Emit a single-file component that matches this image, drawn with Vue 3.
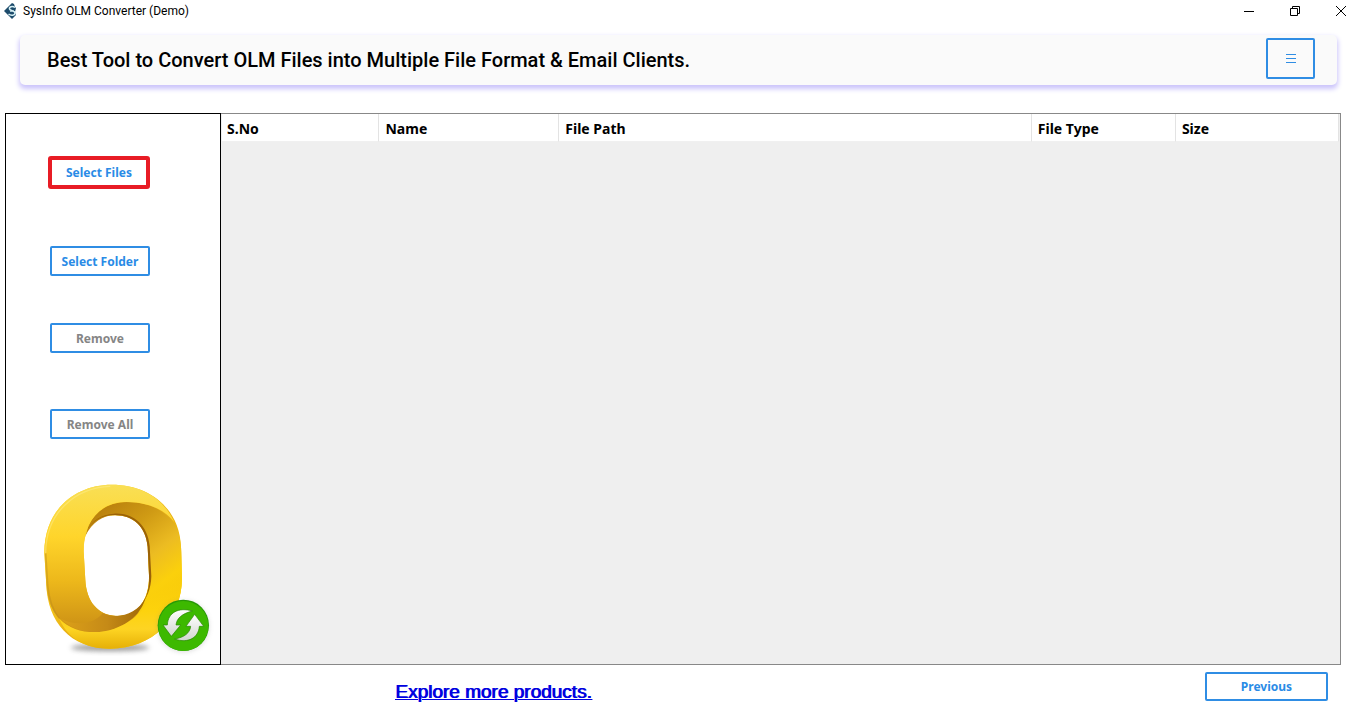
<template>
  <div class="window">
    <header class="titlebar">
      <svg class="app-icon" viewBox="0 0 14 16" aria-hidden="true">
        <path d="M0 8 8 0l2 1 1 3 1 1-1 4 1 3-2 2-2 2z" fill="#1d4b6b" />
        <path d="M11 4.500C8 2.500 5 4 5.500 6S11 7.500 11 10s-4 3-6.500 1M6 8h4" fill="none" stroke="#d8f1f5" stroke-width="1.500" />
      </svg>
      <span class="app-name">SysInfo OLM Converter (Demo)</span>
      <div class="window-controls">
        <button type="button" aria-label="Minimize">
          <svg viewBox="0 0 12 12"><path d="M1 6.500h10" /></svg>
        </button>
        <button type="button" aria-label="Restore">
          <svg viewBox="0 0 12 12"><path d="M1.500 3.500h7v7h-7zM3.500 3V1.500h7v7H9" /></svg>
        </button>
        <button type="button" aria-label="Close">
          <svg viewBox="0 0 12 12"><path d="M1 1l10 10M11 1L1 11" /></svg>
        </button>
      </div>
    </header>

    <section class="banner">
      <h1>Best Tool to Convert OLM Files into Multiple File Format &amp; Email Clients.</h1>
      <button type="button" class="outlined menu" aria-label="Menu">
        <svg viewBox="0 0 10 10"><path d="M0 .5h10M0 4.500h10M0 8.500h10" /></svg>
      </button>
    </section>

    <main class="content">
      <aside class="sidebar">
        <button type="button" class="outlined action highlighted">Select Files</button>
        <button type="button" class="outlined action">Select Folder</button>
        <button type="button" class="outlined action" disabled>Remove</button>
        <button type="button" class="outlined action" disabled>Remove All</button>
        <svg class="logo" viewBox="24 15 528 528" role="img" aria-label="OLM Converter">
          <defs>
            <linearGradient id="outer" x1="0" y1="0" x2="1" y2="1">
              <stop offset="0" stop-color="#fbe04a" />
              <stop offset=".3" stop-color="#fbd021" />
              <stop offset=".55" stop-color="#e8af13" />
              <stop offset=".8" stop-color="#fdd000" />
              <stop offset="1" stop-color="#eab600" />
            </linearGradient>
            <linearGradient id="face" x1="0" y1="0" x2="0" y2="1">
              <stop offset="0" stop-color="#f9df55" />
              <stop offset=".35" stop-color="#ffd52b" />
              <stop offset=".65" stop-color="#edb81b" />
              <stop offset="1" stop-color="#c98d15" />
            </linearGradient>
            <linearGradient id="band" x1=".1" y1="0" x2=".65" y2="1">
              <stop offset="0" stop-color="#b47a0c" />
              <stop offset=".3" stop-color="#cf9a14" />
              <stop offset=".55" stop-color="#ecbc22" />
              <stop offset=".75" stop-color="#fbd00c" />
              <stop offset="1" stop-color="#f6c80c" />
            </linearGradient>
            <linearGradient id="lower" x1="0" y1="0" x2="1" y2="0">
              <stop offset="0" stop-color="#dca019" />
              <stop offset=".55" stop-color="#c58a17" />
              <stop offset="1" stop-color="#9e6708" />
            </linearGradient>
            <linearGradient id="rim" x1="0" y1="0" x2="0" y2="1">
              <stop offset="0" stop-color="#f9cc08" stop-opacity="0" />
              <stop offset=".5" stop-color="#fdd20c" />
              <stop offset=".75" stop-color="#fdd423" />
              <stop offset="1" stop-color="#e6b007" />
            </linearGradient>
            <linearGradient id="arrow" x1="0" y1="0" x2="0" y2="1">
              <stop offset="0" stop-color="#ffffff" />
              <stop offset="1" stop-color="#d2d6d0" />
            </linearGradient>
            <filter id="soft" x="-30%" y="-100%" width="160%" height="300%">
              <feGaussianBlur stdDeviation="8" />
            </filter>
          </defs>
          <ellipse cx="240" cy="518" rx="118" ry="11" fill="#777" opacity=".7" filter="url(#soft)" />
          <path
            fill="url(#outer)"
            fill-rule="evenodd"
            d="M245 29C140 29 43 100 43 233L49 330C53 440 120 521 240 521C370 521 455 430 456 310L453 215C448 100 360 29 245 29ZM255 121C310 121 348 155 353 215L357 300C359 370 325 423 263 423C205 423 169 380 166 315L161 230C158 165 195 121 255 121Z"
          />
          <path
            fill="url(#band)"
            d="M176 150C200 104 242 79 298 81C362 83 410 111 435 148C449 178 453 207 454 230L456 310C455 390 414 452 355 486L263 423C325 423 359 370 357 300L353 215C348 155 310 121 255 121C218 121 186 143 166 183Z"
          />
          <path
            fill="url(#face)"
            d="M245 29C140 29 43 100 43 233L49 330C52 377 68 412 91 434C132 479 201 479 249 463C286 452 314 435 329 407C310 419 286 423 263 423C205 423 169 380 166 315L161 230C161 149 201 85 281 81C355 79 408 106 433 142C399 65 328 29 245 29Z"
          />
          <path fill="url(#lower)" d="M93 432C137 453 192 449 218 414C263 435 322 417 346 369C337 412 292 453 236 467C178 479 126 465 93 432Z" />
          <path fill="url(#rim)" d="M88 431C129 474 199 480 253 461C299 445 345 409 358 367C385 340 435 314 456 286V310C455 430 370 521 240 521C165 521 112 489 88 431Z" />
          <path d="M170 168C186 137 220 117 256 120C310 121 347 154 353 215L357 300C359 338 350 369 332 393C350 370 363 343 364 304L359 213C353 151 311 113 252 116C216 117 184 138 170 168Z" fill="#9b6207" />
          <path d="M47 235C47 112 137 38 241 34" fill="none" stroke="#fff3a0" stroke-width="4" opacity=".4" />
          <path d="M47 235L53 331C57 376 71 410 88 430" fill="none" stroke="#bd8b18" stroke-width="5" opacity=".45" />
          <circle cx="460" cy="454" r="77" fill="#777" opacity=".25" filter="url(#soft)" />
          <circle cx="460" cy="451" r="77" fill="#279807" />
          <circle cx="460" cy="453" r="75" fill="#3db900" />
          <g stroke="#258500" stroke-width="2" fill="url(#arrow)">
            <path d="M487 408C446 396 414 412 412 450H399L424 484L452 450H438C440 430 456 416 487 408Z" />
            <path d="M434 492C475 506 505 489 508 454H521L494 418L468 454H482C480 474 463 487 434 492Z" />
          </g>
        </svg>
      </aside>

      <div class="file-list">
        <table>
          <colgroup>
            <col v-for="column in columns" :key="column.label" :style="{ width: column.width }">
          </colgroup>
          <thead>
            <tr>
              <th v-for="column in columns" :key="column.label" scope="col">{{ column.label }}</th>
            </tr>
          </thead>
        </table>
      </div>
    </main>

    <footer class="footer">
      <a href="#">Explore more products.</a>
      <button type="button" class="outlined previous">Previous</button>
    </footer>
  </div>
</template>

<script setup>
const columns = [
  { label: 'S.No', width: '14.1%' },
  { label: 'Name', width: '16.1%' },
  { label: 'File Path', width: '42.3%' },
  { label: 'File Type', width: '12.9%' },
  { label: 'Size', width: '14.6%' },
]
</script>

<style>
body {
  margin: 0;
  background: #fff;
}
</style>

<style scoped>
* {
  box-sizing: border-box;
}

.window {
  display: flex;
  flex-direction: column;
  min-height: 100vh;
  font-family: "Noto Sans", sans-serif;
  color: #000;
}

button {
  padding: 0;
  font-family: inherit;
}

.titlebar {
  display: flex;
  align-items: center;
  height: 22px;
  padding-left: 4px;
}

.app-icon {
  width: 14px;
  height: 16px;
}

.app-name {
  margin-left: 5px;
  font-family: Roboto, sans-serif;
  font-size: 12px;
}

.window-controls {
  display: flex;
  margin-left: auto;
}

.window-controls button {
  display: flex;
  align-items: center;
  justify-content: center;
  width: 46px;
  height: 20px;
  border: none;
  background: none;
}

.window-controls button:last-child {
  margin-right: 2px;
}

.window-controls svg {
  width: 12px;
  height: 12px;
  fill: none;
  stroke: #000;
}

.banner {
  display: flex;
  align-items: center;
  justify-content: space-between;
  height: 50px;
  margin: 13px 29px 0 20px;
  padding: 0 22px 0 27px;
  border-radius: 5px;
  background: #fafafa;
  box-shadow: 0 3px 5px 1px #cbc4fb;
}

h1 {
  margin: 0;
  font-family: Roboto, sans-serif;
  font-size: 20px;
  font-weight: 500;
}

.outlined {
  border: 2px solid #2f8de4;
  border-radius: 2px;
  background: #fff;
  color: #2a8be6;
  font-size: 12px;
  font-weight: bold;
}

.outlined:disabled {
  color: #858585;
}

.menu {
  display: flex;
  align-items: center;
  justify-content: center;
  width: 49px;
  height: 41px;
  margin-bottom: 3px;
  background: #fafafa;
}

.menu svg {
  width: 10px;
  height: 10px;
  stroke: #2f8de4;
}

.content {
  display: flex;
  flex: 1;
  margin: 28px 25px 0 5px;
}

.sidebar {
  display: flex;
  flex-direction: column;
  flex: none;
  width: 216px;
  padding: 42px 0 7px 44px;
  border: 1px solid #000;
}

.action {
  width: 100px;
  height: 30px;
  margin-bottom: 56px;
}

.action:nth-child(2) {
  margin-bottom: 47px;
}

.action:nth-child(4) {
  margin-bottom: 41px;
}

.highlighted {
  width: 102px;
  height: 33px;
  margin-bottom: 57px;
  margin-left: -2px;
  border: 4px solid #e81c25;
  border-radius: 3px;
}

.logo {
  width: 176px;
  height: 176px;
  margin-left: -12px;
}

.file-list {
  flex: 1;
  border: 1px solid #888;
  border-left: none;
  padding: 0 1px;
  background: #efefef;
}

table {
  width: 100%;
  table-layout: fixed;
  border-collapse: separate;
  border-spacing: 0;
}

th {
  height: 28px;
  padding: 2px 6px 0;
  border-right: 1px solid #e3e3e3;
  border-bottom: 1px solid #f0f0f0;
  background: #fff;
  font-size: 14px;
  line-height: 20px;
  text-align: left;
}

th:first-child {
  padding-left: 5px;
}

.footer {
  display: flex;
  align-items: flex-start;
  justify-content: space-between;
  height: 63px;
  padding: 7px 38px 0 395px;
}

.footer a {
  margin-top: 9px;
  color: #0000e0;
  font-family: "Liberation Sans", Arial, sans-serif;
  font-size: 19px;
  line-height: 22px;
  text-shadow: 1px 0 #0000e0;
}

.previous {
  width: 123px;
  height: 29px;
}
</style>
